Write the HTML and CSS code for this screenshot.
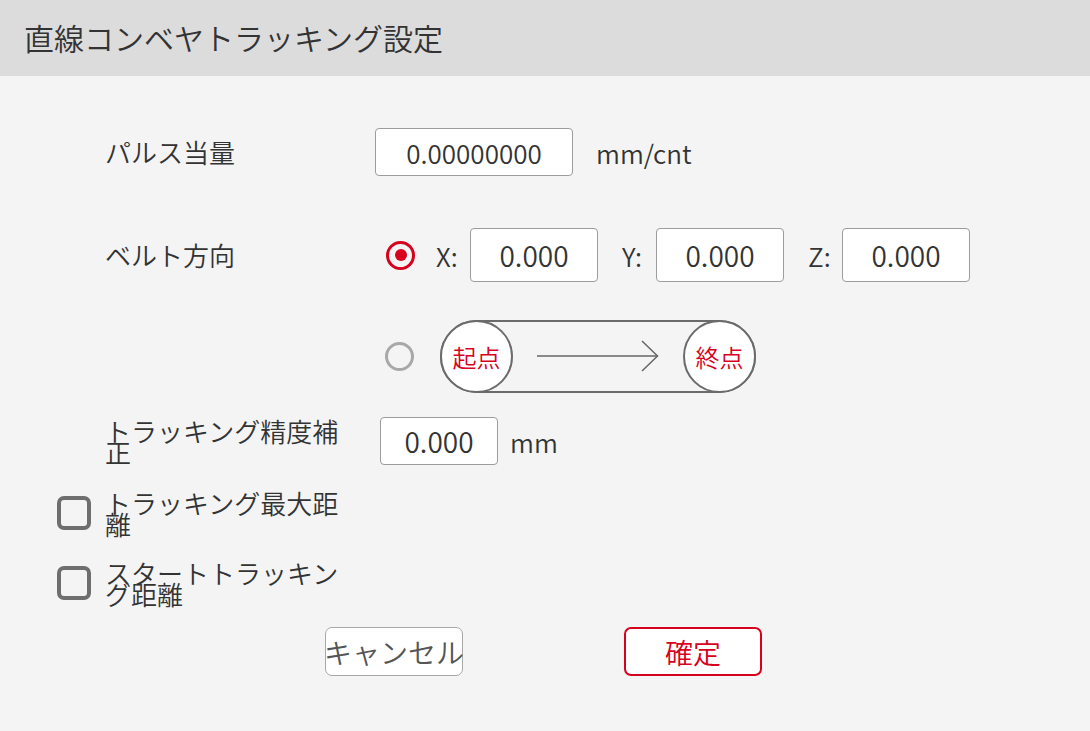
FILE: index.html
```html
<!DOCTYPE html>
<html lang="ja">
<head>
<meta charset="utf-8">
<title>直線コンベヤトラッキング設定</title>
<link rel="stylesheet" href="styles.css">
</head>
<body>
<div class="header"><h1 class="title">直線コンベヤトラッキング設定</h1></div>
<div class="content">
  <div class="row row-pulse">
    <div class="label label-wide">パルス当量</div>
    <div class="field field-pulse">0.00000000</div>
    <div class="unit">mm/cnt</div>
  </div>

  <div class="row row-dir">
    <div class="label label-dir">ベルト方向</div>
    <div class="radio checked"></div>
    <div class="axis">
      <span class="axis-name">X:</span><div class="field field-axis">0.000</div>
    </div>
    <div class="axis">
      <span class="axis-name">Y:</span><div class="field field-axis">0.000</div>
    </div>
    <div class="axis">
      <span class="axis-name">Z:</span><div class="field field-axis">0.000</div>
    </div>
  </div>

  <div class="row row-conveyor">
    <div class="label label-dir"></div>
    <div class="radio"></div>
    <div class="conveyor">
      <div class="pulley">起点</div>
      <svg class="arrow" width="122" height="32" viewBox="0 0 122 32">
        <line x1="0" y1="16" x2="120.5" y2="16" stroke="#666" stroke-width="1.5"/>
        <polyline points="105,1 120.5,16 105,31" fill="none" stroke="#666" stroke-width="1.5"/>
      </svg>
      <div class="pulley">終点</div>
    </div>
  </div>

  <div class="row row-accuracy">
    <div class="label label-wrap">トラッキング精度補正</div>
    <div class="field field-acc">0.000</div>
    <div class="unit unit-mm">mm</div>
  </div>

  <div class="row row-check row-check-max">
    <div class="checkbox"></div>
    <div class="label label-wrap">トラッキング最大距離</div>
  </div>

  <div class="row row-check row-check-start">
    <div class="checkbox"></div>
    <div class="label label-wrap">スタートトラッキング距離</div>
  </div>

  <div class="row row-buttons">
    <button class="btn btn-cancel">キャンセル</button>
    <button class="btn btn-ok">確定</button>
  </div>
</div>
</body>
</html>
```
FILE: styles.css
```css
* { box-sizing: border-box; }

html, body {
  margin: 0;
  padding: 0;
}

body {
  width: 1090px;
  height: 731px;
  overflow: hidden;
  background: #f4f4f4;
  font-family: "Noto Sans CJK JP", "Noto Sans", sans-serif;
  font-weight: 350;
  color: #333;
}

.header {
  height: 76px;
  background: #dcdcdc;
  display: flex;
  align-items: center;
  padding-left: 24px;
}

.title {
  margin: 0;
  font-size: 30px;
  font-weight: 350;
  color: #333;
  line-height: 1;
  padding-bottom: 2px;
}

.content {
  padding-top: 52px;
}

.row {
  display: flex;
  align-items: center;
  padding-left: 105px;
}

.label {
  font-size: 26px;
  line-height: 30px;
  color: #333;
  flex: none;
}

.label-wide { width: 270px; }
.label-dir { width: 281px; }

.label-wrap {
  width: 240px;
  line-height: 21px;
}

.field {
  flex: none;
  background: #fff;
  border: 1.5px solid #9c9c9c;
  border-radius: 4px;
  display: flex;
  align-items: center;
  justify-content: center;
  font-size: 28px;
  color: #333;
}

.row-pulse { height: 48px; }
.field-pulse { width: 198px; height: 48px; font-size: 26px; }

.unit {
  font-size: 26px;
  color: #333;
  margin-left: 23px;
}

.row-dir {
  height: 54px;
  margin-top: 52px;
}

.radio {
  flex: none;
  width: 29px;
  height: 29px;
  border-radius: 50%;
  border: 3px solid #a8a8a8;
  display: flex;
  align-items: center;
  justify-content: center;
}

.radio.checked {
  border-color: #d7001d;
}

.radio.checked::after {
  content: "";
  width: 12px;
  height: 12px;
  border-radius: 50%;
  background: #d7001d;
}

.axis {
  display: flex;
  align-items: center;
  margin-left: 24px;
}

.row-dir .radio { margin-right: -3px; }

.axis-name {
  width: 22px;
  margin-right: 12px;
  font-size: 26px;
  color: #333;
}

.field-axis { width: 128px; height: 54px; }

.row-conveyor {
  height: 72px;
  margin-top: 38px;
}

.row-conveyor .radio { margin-left: -1px; }

.conveyor {
  margin-left: 26px;
  width: 316px;
  height: 73px;
  border: 2px solid #6b6b6b;
  border-radius: 37px;
  display: flex;
  align-items: center;
  justify-content: space-between;
}

.pulley {
  width: 73px;
  height: 73px;
  margin: -2px;
  border: 2px solid #6b6b6b;
  border-radius: 50%;
  background: #fff;
  display: flex;
  align-items: center;
  justify-content: center;
  color: #d7001d;
  font-size: 24px;
}

.arrow { display: block; }

.row-accuracy {
  height: 48px;
  margin-top: 25px;
}

.row-accuracy .label-wrap { margin-right: 35px; }

.field-acc { width: 118px; height: 48px; }

.unit-mm { margin-left: 12px; }

.row-check {
  padding-left: 57px;
  height: 42px;
}

.row-check-max { margin-top: 27px; }
.row-check-start { margin-top: 28px; }

.checkbox {
  flex: none;
  width: 34px;
  height: 34px;
  border: 4px solid #6e6e6e;
  border-radius: 7px;
  margin-right: 14px;
}

.row-buttons {
  padding-left: 325px;
  margin-top: 23px;
  gap: 161px;
}

.btn {
  width: 138px;
  height: 49px;
  padding: 0;
  background: #fff;
  border-radius: 7px;
  font-family: "Noto Sans CJK JP", "Noto Sans", sans-serif;
  font-weight: 350;
  font-size: 28px;
  line-height: 1;
  white-space: nowrap;
  display: flex;
  align-items: center;
  justify-content: center;
}

.btn-cancel {
  border: 1.5px solid #a8a8a8;
  color: #555;
}

.btn-ok {
  border: 2px solid #d7001d;
  color: #d7001d;
}
```
